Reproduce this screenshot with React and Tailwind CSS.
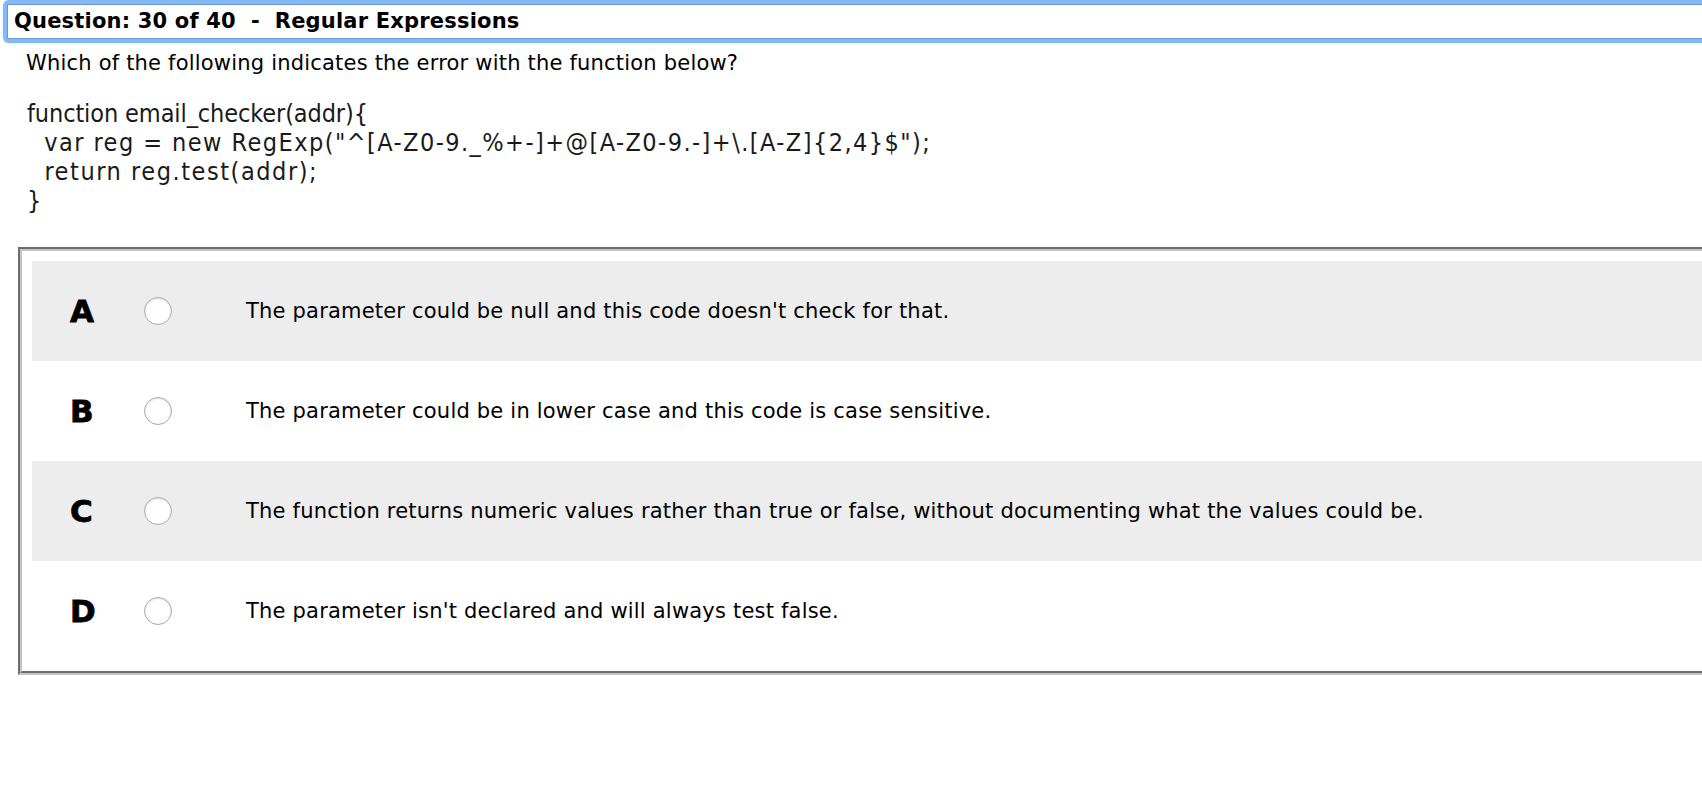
import React, { useState } from 'react';

const options = [
  { key: 'A', text: "The parameter could be null and this code doesn't check for that." },
  { key: 'B', text: 'The parameter could be in lower case and this code is case sensitive.' },
  { key: 'C', text: 'The function returns numeric values rather than true or false, without documenting what the values could be.' },
  { key: 'D', text: "The parameter isn't declared and will always test false." },
];

// spacing differs per line to follow the original rendering
const codeLines = [
  { text: 'function email_checker(addr){', cls: 'tracking-[-0.1px]' },
  { text: '  var reg = new RegExp("^[A-Z0-9._%+-]+@[A-Z0-9.-]+\\.[A-Z]{2,4}$");', cls: 'tracking-[1.45px]' },
  { text: '  return reg.test(addr);', cls: 'tracking-[1.55px]' },
  { text: '}', cls: '' },
];

const App = () => {
  const [picked, setPicked] = useState(null);

  return (
    <div className="min-h-screen w-[1702px] overflow-hidden bg-white text-black" style={{ fontFamily: '"DejaVu Sans", Verdana, sans-serif' }}>
      {/* header bar with focus glow */}
      <div className="ml-[3px] h-[43px] rounded-l-[6px] border-[4px] border-r-0 border-[#84b9f7] bg-white shadow-[0_0_2px_#b5d4fa]">
        <div className="flex h-full items-center border border-r-0 border-[#6f95cc] pl-[6px]">
          <span className="whitespace-pre text-[21px] font-bold leading-none tracking-[0.19px]">
            {'Question: 30 of 40  -  Regular Expressions'}
          </span>
        </div>
      </div>

      <p className="mt-[8px] pl-[26px] text-[21px] leading-[24px] tracking-[0.2px]">
        Which of the following indicates the error with the function below?
      </p>

      <div className="mt-[24px] pl-[27px]" style={{ fontFamily: '"DejaVu Sans Condensed", Tahoma, sans-serif' }}>
        {codeLines.map((line, i) => (
          <div key={i} className={`whitespace-pre text-[25px] leading-[29px] text-[#1a1a1a] ${line.cls}`}>
            {line.text}
          </div>
        ))}
      </div>

      <div className="mt-[32px] ml-[18px] border-2 border-r-0 border-t-[#6e6e6e] border-l-[#6e6e6e] border-b-[#c4c4c4]">
        <div className="border-2 border-r-0 border-t-[#c4c4c4] border-l-[#c4c4c4] border-b-[#6e6e6e] py-[10px] pl-[10px]">
          {options.map((opt, i) => (
            <label
              key={opt.key}
              className={`flex h-[100px] cursor-pointer items-center ${i % 2 === 0 ? 'bg-[#ededed]' : 'bg-white'}`}
            >
              <span className="w-[112px] pl-[38px] text-[31px] font-bold leading-none [-webkit-text-stroke:0.8px_#000]">{opt.key}</span>
              <span className="flex h-[28px] w-[28px] items-center justify-center rounded-full border border-[#a9a9a9] bg-white shadow-[inset_0_1px_2px_rgba(0,0,0,0.12)]">
                <input
                  type="radio"
                  name="answer"
                  className="sr-only"
                  checked={picked === opt.key}
                  onChange={() => setPicked(opt.key)}
                />
                {picked === opt.key && <span className="h-[12px] w-[12px] rounded-full bg-[#333]" />}
              </span>
              <span className="ml-[74px] text-[21px] leading-none tracking-[0.2px]">{opt.text}</span>
            </label>
          ))}
        </div>
      </div>
    </div>
  );
};

export default App;
